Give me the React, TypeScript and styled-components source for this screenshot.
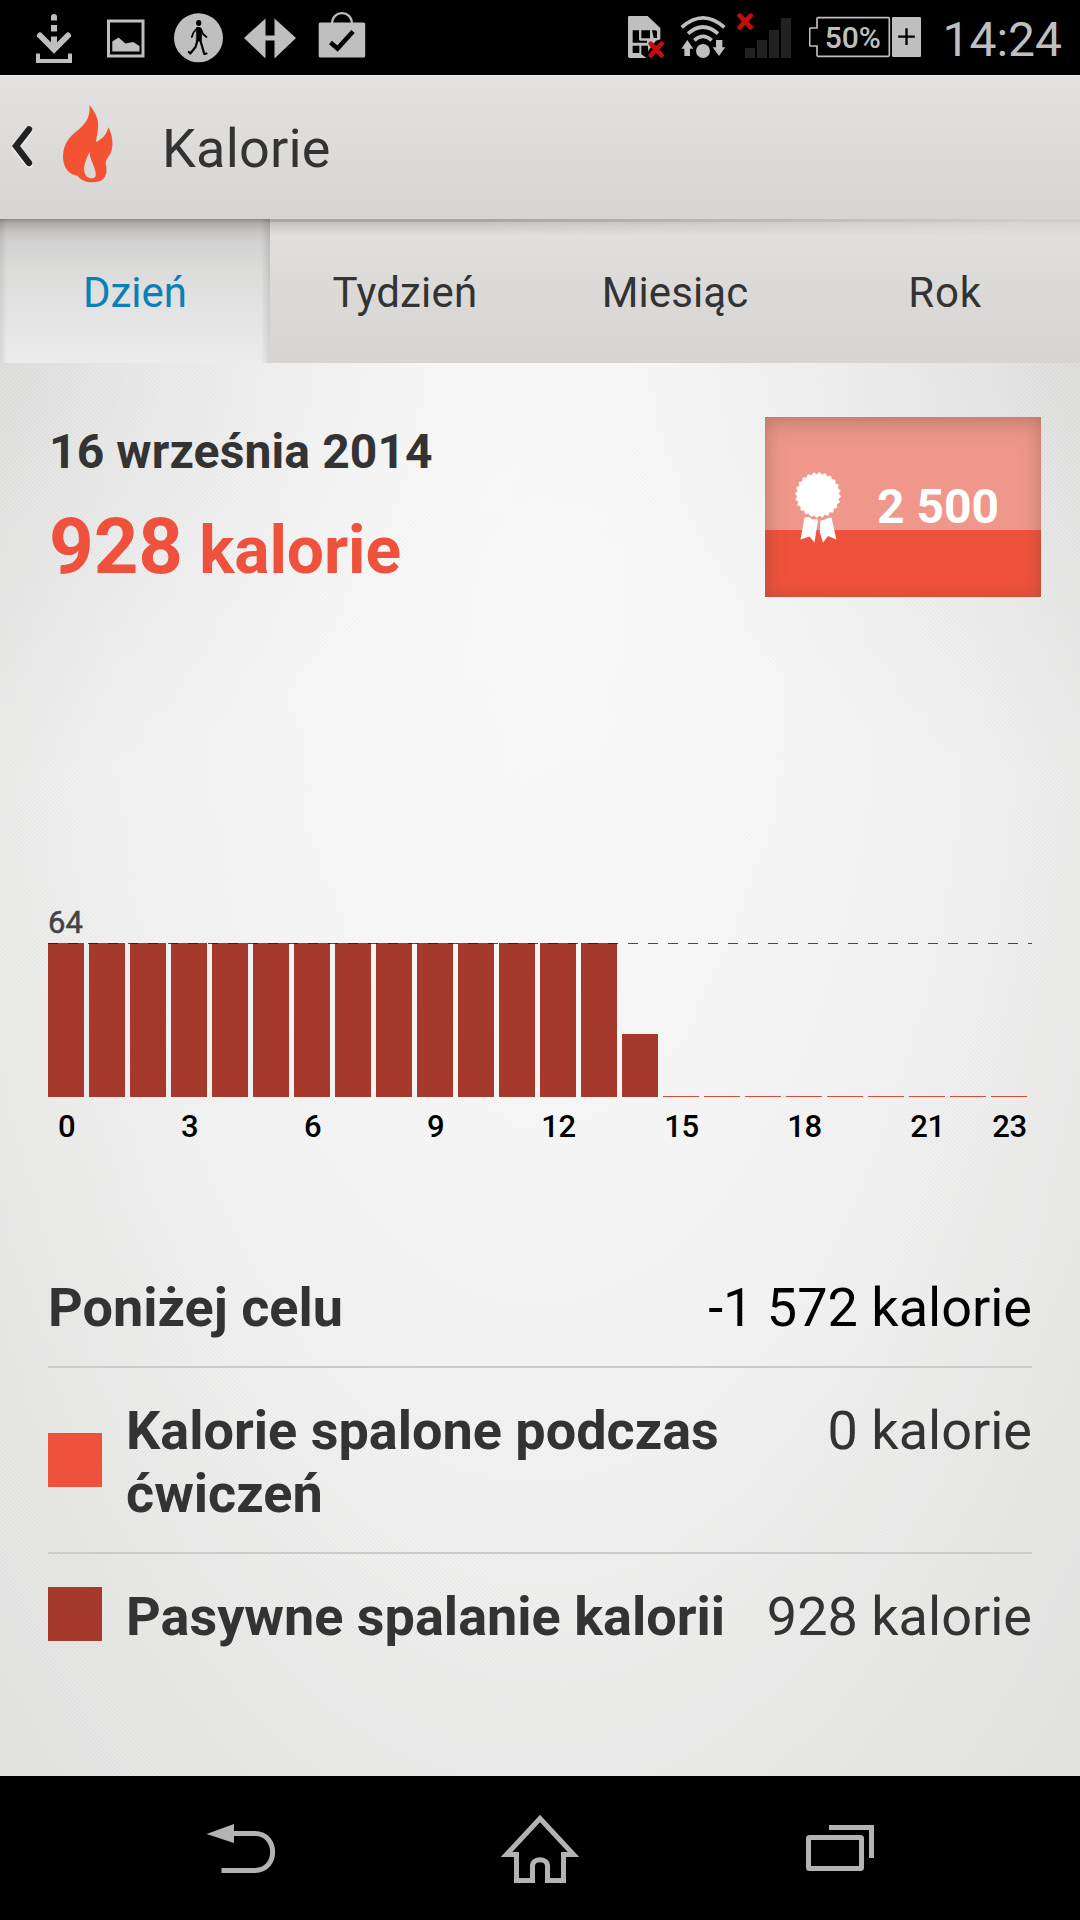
import React from "react";
import styled, { createGlobalStyle } from "styled-components";

const GlobalStyle = createGlobalStyle`
  * { box-sizing: border-box; }
  body {
    margin: 0;
    background: #000;
    font-family: Roboto, "Noto Sans", sans-serif;
  }
  svg { display: block; flex: none; }
`;

const ORANGE = "#ee523c";
const BRICK = "#a5392c";
const INK = "#333333";
const STATUS = "#bfbfbf";

const Screen = styled.div`
  width: 1080px;
  height: 1920px;
  display: flex;
  flex-direction: column;
  overflow: hidden;
`;

/* ---------- status bar ---------- */

const StatusBar = styled.div`
  height: 75px;
  flex: none;
  display: flex;
  background: #000;
  color: ${STATUS};
`;

const Notifications = styled.div`
  display: flex;
  padding-left: 18px;
`;

const NotificationSlot = styled.div`
  width: 72px;
  height: 75px;
  display: flex;
  align-items: center;
  justify-content: center;
`;

const SystemTray = styled.div`
  display: flex;
  margin-left: auto;
  padding-right: 18px;
`;

const TrayItem = styled.div<{ $gap: number }>`
  margin-right: ${(p) => p.$gap}px;
`;

const Clock = styled.div`
  font-size: 48px;
  line-height: 79px;
`;

/* ---------- header ---------- */

const Header = styled.header`
  height: 144px;
  flex: none;
  display: flex;
  align-items: center;
  padding-left: 11px;
  background: linear-gradient(#e3e2e0, #d6d5d3);
  border-top: 1px solid #ecebea;
`;

const BackChevron = styled.svg`
  width: 23px;
  height: 46px;
  margin-top: -3px;
  filter: drop-shadow(0 1px 1px #fff);
`;

const Flame = styled.svg`
  width: 55px;
  height: 82px;
  margin: -7px 0 0 26px;
`;

const Title = styled.h1`
  margin: 2px 0 0 47px;
  font-size: 54px;
  font-weight: 400;
  letter-spacing: 0.2px;
  color: ${INK};
`;

/* ---------- tabs ---------- */

const TabBar = styled.nav`
  position: relative;
  height: 144px;
  flex: none;
  display: grid;
  grid-template-columns: repeat(4, 1fr);
  background: linear-gradient(#e2e1df, #dcdbd9 40%, #d6d5d3);

  &::before {
    content: "";
    position: absolute;
    inset: 0 0 auto 0;
    height: 16px;
    background: linear-gradient(#a8a7a6 0 3px, rgba(120, 120, 120, 0.28) 3px, transparent);
    mask-image: linear-gradient(90deg, #000 45%, rgba(0, 0, 0, 0.35) 95%);
  }
`;

const Tab = styled.div<{ $active?: boolean; $spread?: number }>`
  position: relative;
  padding-top: 3px;
  display: flex;
  align-items: center;
  justify-content: center;
  font-size: 42px;
  letter-spacing: ${(p) => p.$spread ?? 0}px;
  color: ${(p) => (p.$active ? "#0a80b8" : INK)};
  background: ${(p) =>
    p.$active
      ? `linear-gradient(90deg, rgba(0,0,0,.09), transparent 7px, transparent 261px, rgba(0,0,0,.11)),
         linear-gradient(#8a8988 0, #adacab 4px, #c3c2c1 12px, #d2d1d1 22px, #dbdbda 50px, #e3e3e3 90px, #ececec)`
      : "none"};
`;

/* ---------- content ---------- */

const Content = styled.main`
  flex: 1;
  padding: 54px 48px 0;
  display: flex;
  flex-direction: column;
  color: ${INK};
  background:
    repeating-linear-gradient(135deg, rgba(0, 0, 0, 0.022) 0 1px, rgba(255, 255, 255, 0.1) 1.4px 2.4px, rgba(0, 0, 0, 0.022) 2.83px),
    radial-gradient(ellipse 480px 420px at 0 0, rgba(0, 0, 0, 0.06), transparent),
    radial-gradient(ellipse 480px 420px at 100% 0, rgba(0, 0, 0, 0.06), transparent),
    radial-gradient(ellipse 900px 1800px at 540px 260px, #fbfbfb 0, #f8f8f8 25%, #f2f2f2 48%, #ebebea 62%, #e4e4e3 80%, #dededd 100%);
`;

const Summary = styled.section`
  display: flex;
  justify-content: space-between;
  margin-right: -9px;
`;

const SummaryText = styled.div`
  padding: 7px 0 0 1px;
`;

const DateLine = styled.div`
  font-size: 48px;
  line-height: 56px;
  font-weight: 700;
  letter-spacing: 0.12px;
`;

const Burned = styled.div`
  margin-top: 22px;
  font-size: 78px;
  line-height: 90px;
  font-weight: 700;
  letter-spacing: -0.12px;
  color: ${ORANGE};
  white-space: pre;
`;

const BurnedUnit = styled.span`
  font-size: 66px;
`;

const GoalBadge = styled.div`
  width: 276px;
  height: 180px;
  padding-left: 30px;
  display: flex;
  align-items: center;
  gap: 36px;
  font-size: 48px;
  font-weight: 700;
  color: #fff;
  background: linear-gradient(#ee978a 0 113px, ${ORANGE} 113px);
  box-shadow:
    inset 0 8px 22px rgba(110, 80, 60, 0.26),
    inset 0 0 14px rgba(110, 60, 40, 0.2);
`;

const GoalValue = styled.span`
  margin-top: -2px;
`;

const Chart = styled.section`
  margin-top: 308px;
  display: flex;
  flex-direction: column;
`;

const PeakLabel = styled.div`
  font-size: 31px;
  line-height: 36px;
  color: #444;
  -webkit-text-stroke: 0.5px #444;
`;

const Plot = styled.div`
  position: relative;
  margin-top: 2px;
  height: 154px;
  display: grid;
  grid-template-columns: repeat(24, 41px);
  align-items: end;

  &::after {
    content: "";
    position: absolute;
    inset: 0 0 auto 0;
    height: 1px;
    background: repeating-linear-gradient(90deg, rgba(20, 25, 20, 0.78) 0 10px, transparent 10px 20px);
  }
`;

const Bar = styled.div<{ $empty: boolean }>`
  width: 36px;
  background: ${(p) => (p.$empty ? "#d94a3c" : BRICK)};
`;

const Hours = styled.div`
  margin-top: 12px;
  display: grid;
  grid-template-columns: repeat(24, 41px);
`;

const Hour = styled.span`
  width: 37px;
  display: flex;
  justify-content: center;
  font-size: 31px;
  line-height: 36px;
  font-weight: 500;
  letter-spacing: -0.4px;
  color: #000;
`;

const Breakdown = styled.section`
  margin-top: 100px;
`;

const Row = styled.div`
  display: flex;
  align-items: center;
  padding: 31px 0 27px;
  font-size: 54px;
  line-height: 63px;

  &:first-child {
    padding-top: 31px;
  }

  & + & {
    border-top: 2px solid #cbcbcb;
  }
`;

const Swatch = styled.div<{ $color: string }>`
  width: 54px;
  height: 54px;
  flex: none;
  margin: -4.5px 24px 0 0;
  background: ${(p) => p.$color};
`;

const RowLabel = styled.div`
  flex: 1;
  font-weight: 700;
`;

const RowValue = styled.div<{ $strong?: boolean }>`
  align-self: flex-start;
  white-space: nowrap;
  color: ${(p) => (p.$strong ? "#000" : INK)};
`;

/* ---------- navigation bar ---------- */

const NavBar = styled.footer`
  height: 144px;
  flex: none;
  padding: 0 90px;
  display: grid;
  grid-template-columns: repeat(3, 1fr);
  place-items: center;
  background: #000;
`;

const NavIcon = styled.svg`
  width: 90px;
  height: 90px;
  fill: none;
  stroke: #b3b3b3;
`;

/* ---------- drawings ---------- */

const scallop = Array.from({ length: 48 }, (_, i) => {
  const r = i % 2 ? 20.6 : 22.8;
  const a = (i * Math.PI) / 24 + 0.065;
  return `${(23 + r * Math.cos(a)).toFixed(2)},${(24 + r * Math.sin(a)).toFixed(2)}`;
}).join(" ");

const Rosette = () => (
  <svg width="46" height="72" viewBox="0 0 46 72" fill="#fff" stroke="#fff" strokeLinejoin="round">
    <polygon points={scallop} strokeWidth="0.6" />
    <path d="M9.500 46.500L14 46L17.500 48.500L22 48L23 49.500L19.500 71.500L14.500 65.500L5.500 68.500Z" stroke="none" />
    <path d="M25.500 49.500L30 48.500L33 47L36.500 46.500L41.300 68.500L33 65L28 71.500L24.700 61Z" stroke="none" />
  </svg>
);

const DownloadIcon = () => (
  <svg width="60" height="60" viewBox="0 0 60 60" fill="none" stroke={STATUS}>
    <path d="M30 8.500V12.500M30 17V23.500M30 28.500V40" strokeWidth="6" />
    <path d="M27 9a3 3 0 0 1 6 0" fill={STATUS} stroke="none" />
    <path d="M16 27.500L30 41.500L44 27.500" strokeWidth="6" strokeLinecap="round" />
    <path d="M14 45.500V53H46V45.500" strokeWidth="4" />
  </svg>
);

const PictureIcon = () => (
  <svg width="60" height="60" viewBox="0 0 60 60">
    <rect x="12.500" y="13" width="34.500" height="35" fill="none" stroke={STATUS} strokeWidth="3" />
    <path d="M16.300 33.500L22.500 29.500L29.500 35.500L37 34L43.500 38V43.500H16.300Z" fill={STATUS} />
  </svg>
);

const WalkIcon = () => (
  <svg width="60" height="60" viewBox="0 0 60 60" fill="none" stroke="#000" strokeLinecap="round" strokeLinejoin="round">
    <circle cx="30.500" cy="29.800" r="24.500" fill={STATUS} stroke="none" />
    <ellipse cx="30.700" cy="15" rx="2.600" ry="3" fill="#000" stroke="none" />
    <path d="M29 19.500h3.200l1.500 5-.5 8.500h-4.500z" fill="#000" strokeWidth="0.8" />
    <path d="M29 20.500L25.500 24.500L23.800 29M33 21L35 26L38.500 29" strokeWidth="1.800" />
    <path d="M29.500 32.500L27.500 39L22.300 45.500L20.800 44M32.300 32.500L34.300 39L36.200 46L38.500 45.500" strokeWidth="2.200" />
  </svg>
);

const ArrowsIcon = () => (
  <svg width="60" height="60" viewBox="0 0 60 60" fill={STATUS}>
    <path d="M4 30L25.500 10.500V27.500H34.500V10.500L56 30L34.500 50.500V32.500H25.500V50.500Z" />
  </svg>
);

const ShopIcon = () => (
  <svg width="60" height="60" viewBox="0 0 60 60" fill="none">
    <path d="M20 16C20 1.500 40 1.500 40 16" stroke={STATUS} strokeWidth="2.200" />
    <rect x="6.700" y="14.500" width="46.500" height="35" rx="1.500" fill={STATUS} />
    <path d="M18.500 34.500L25.500 40.500L41 23.500" stroke="#000" strokeWidth="4.500" />
  </svg>
);

const SimIcon = () => (
  <svg width="38" height="75" viewBox="84 0 114 225">
    <path d="M86 48H143L181 84V174H88L84 170V50Z" fill={STATUS} />
    <path d="M98 91h19v27q0 4 4 4h20v6H98z M124 91h26v24h-26z M156 91h10q5 0 5 5v18h-10z M98 137h20v22H98z M124 137h20v22l8 15h-12l-16-11z" fill="#000" />
    <path d="M183 118V176H138L146 150L168 122Z" fill="#000" />
    <path d="M152 131L185 166M185 131L152 166" stroke="#c40d0d" strokeWidth="14" strokeLinecap="round" />
  </svg>
);

const WifiIcon = () => (
  <svg width="46" height="75" viewBox="240 0 138 225" fill="none" stroke={STATUS} strokeWidth="11">
    <path d="M245 82Q309 25 373 82M264 101Q309 61 354 101M283 121Q309 97 335 121" />
    <circle cx="309" cy="153" r="21" fill={STATUS} stroke="none" />
    <path d="M262 120L280 146H270V168H253V146H244ZM357 168L376 142H367V120H348V142H338Z" fill={STATUS} stroke="none" />
  </svg>
);

const SignalIcon = () => (
  <svg width="55" height="75" viewBox="411 0 165 225">
    <path d="M435 144h30v30h-30z M471 120h30v54h-30z M507 90h30v84h-30z M543 54h30v120h-30z" fill="#222" />
    <path d="M419 47L452 82M452 47L419 82" stroke="#c40d0d" strokeWidth="14" strokeLinecap="round" />
  </svg>
);

const BatteryIcon = () => (
  <svg width="112" height="75" viewBox="627 0 336 225">
    <path d="M651 56Q651 53 654 53H865Q868 53 868 56V166Q868 169 865 169H654Q651 169 651 166V138H633Q629 138 629 134V88Q629 84 633 84H651Z" fill="none" stroke={STATUS} strokeWidth="5" />
    <rect x="876" y="51" width="87" height="120" rx="4" fill={STATUS} />
    <path d="M919.500 85V135M894.500 110H944.500" stroke="#000" strokeWidth="7" />
    <text x="674" y="144" fontSize="90" fontWeight="500" fill={STATUS}>50%</text>
  </svg>
);

/* ---------- data ---------- */

const PEAK = 64;
const hourly = Array.from({ length: 24 }, (_, h) => (h < 14 ? 64 : h === 14 ? 26.2 : 0));
const hasLabel = (h: number) => h % 3 === 0 || h === 23;

const rows = [
  { label: "Poniżej celu", value: "-1 572 kalorie", strong: true },
  { label: "Kalorie spalone podczas ćwiczeń", value: "0 kalorie", color: ORANGE },
  { label: "Pasywne spalanie kalorii", value: "928 kalorie", color: BRICK },
];

const notifications = [DownloadIcon, PictureIcon, WalkIcon, ArrowsIcon, ShopIcon];

export default function App() {
  return (
    <Screen>
      <GlobalStyle />
      <StatusBar>
        <Notifications>
          {notifications.map((Icon, i) => (
            <NotificationSlot key={i}>
              <Icon />
            </NotificationSlot>
          ))}
        </Notifications>
        <SystemTray>
          <TrayItem $gap={14}><SimIcon /></TrayItem>
          <TrayItem $gap={11}><WifiIcon /></TrayItem>
          <TrayItem $gap={17}><SignalIcon /></TrayItem>
          <TrayItem $gap={21}><BatteryIcon /></TrayItem>
          <Clock>14:24</Clock>
        </SystemTray>
      </StatusBar>

      <Header>
        <BackChevron viewBox="33 369 69 138">
          <path d="M87 388L48 438L87 489" fill="none" stroke="#222" strokeWidth="19" strokeLinecap="round" />
        </BackChevron>
        <Flame viewBox="180 310 165 246">
          <path
            fillRule="evenodd"
            fill="#f35333"
            d="M268 316C292 345 298 366 293 395C290 410 289 420 288 427C306 420 321 403 325 383C337 405 341 435 334 455C328 472 314 480 318 497C322 515 319 536 301 544C276 552 247 547 232 528C205 525 188 500 189 468C190 430 210 410 235 390C262 368 272 345 268 316ZM268 457C258 480 250 498 253 515C256 530 264 536 275 536C287 536 289 530 286 515C282 495 270 480 268 457Z"
          />
        </Flame>
        <Title>Kalorie</Title>
      </Header>

      <TabBar>
        <Tab $active>Dzień</Tab>
        <Tab $spread={0.2}>Tydzień</Tab>
        <Tab $spread={0.1}>Miesiąc</Tab>
        <Tab $spread={0.8}>Rok</Tab>
      </TabBar>

      <Content>
        <Summary>
          <SummaryText>
            <DateLine>16 września 2014</DateLine>
            <Burned>
              928<BurnedUnit> kalorie</BurnedUnit>
            </Burned>
          </SummaryText>
          <GoalBadge>
            <Rosette />
            <GoalValue>2 500</GoalValue>
          </GoalBadge>
        </Summary>

        <Chart>
          <PeakLabel>{PEAK}</PeakLabel>
          <Plot>
            {hourly.map((kcal, h) => (
              <Bar key={h} $empty={kcal === 0} style={{ height: Math.max(1, Math.round((kcal / PEAK) * 154)) }} />
            ))}
          </Plot>
          <Hours>
            {hourly.map((_, h) => (
              <Hour key={h}>{hasLabel(h) ? h : null}</Hour>
            ))}
          </Hours>
        </Chart>

        <Breakdown>
          {rows.map((row) => (
            <Row key={row.label}>
              {row.color && <Swatch $color={row.color} />}
              <RowLabel>{row.label}</RowLabel>
              <RowValue $strong={row.strong}>{row.value}</RowValue>
            </Row>
          ))}
        </Breakdown>
      </Content>

      <NavBar>
        <NavIcon viewBox="195 1803 90 90">
          <path d="M206.500 1834L234 1824V1843Z" fill="#b3b3b3" stroke="none" />
          <path d="M233 1833.500H255C278.500 1833.500 278.500 1870.500 255 1870.500H221.500" strokeWidth="5" />
        </NavIcon>
        <NavIcon viewBox="495 1803 90 90">
          <path
            strokeWidth="5"
            d="M540 1818.500L506.500 1854.500H516.500V1880.500H532.500V1866C532.500 1857.500 547.500 1857.500 547.500 1866V1880.500H563.500V1854.500H573.500Z"
          />
        </NavIcon>
        <NavIcon viewBox="795 1803 90 90">
          <rect x="808.500" y="1837.500" width="53" height="31" rx="1" strokeWidth="5" />
          <path d="M829 1827.500H871.500V1858" strokeWidth="5" />
        </NavIcon>
      </NavBar>
    </Screen>
  );
}
